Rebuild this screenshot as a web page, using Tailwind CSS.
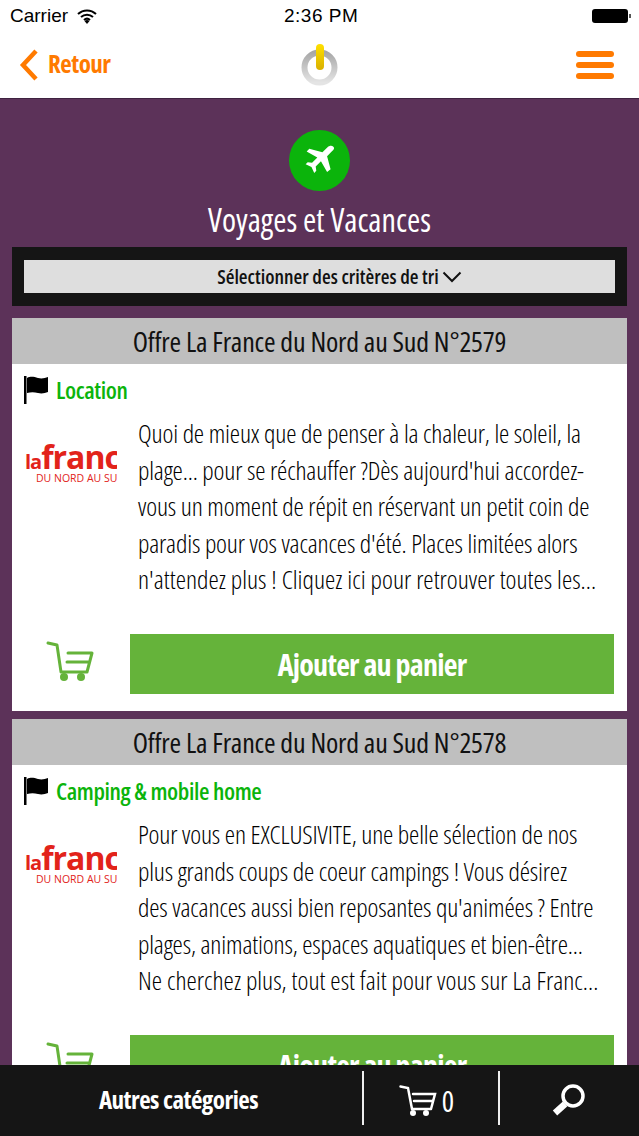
<!DOCTYPE html>
<html><head><meta charset="utf-8"><script src="https://cdn.jsdelivr.net/npm/@tailwindcss/browser@4"></script></head>
<body class="m-0">
<div class="relative w-[639px] h-[1136px] overflow-hidden bg-[#5c3259] font-['Open_Sans',sans-serif] font-stretch-condensed">
  <div class="bg-white h-[99px] border-b border-[#3f2240]">
    <div class="h-[32px] flex items-center justify-between relative pl-[10px] pr-[8px] font-['Liberation_Sans',sans-serif] font-stretch-normal text-black">
      <div class="flex items-center gap-[9px] text-[19px]"><span>Carrier</span>
        <svg width="20" height="15" viewBox="0 0 20 15"><path d="M1 5a13 13 0 0 1 18 0M4 8a9 9 0 0 1 12 0M7 11a4.500 4.500 0 0 1 6 0" fill="none" stroke="#000" stroke-width="2"/><path d="M10 15l-2.500-3a4 4 0 0 1 5 0z"/></svg></div>
      <span class="absolute left-[284px] top-[4px] text-[19px] tracking-[0.5px] leading-[24px]">2:36 PM</span>
      <svg width="40" height="16" viewBox="0 0 40 16" class="mr-[-1px]"><rect x="0" y="1" width="36" height="14" rx="3"/><rect x="37" y="6" width="2" height="4" fill="#555"/></svg>
    </div>
    <div class="h-[66px] flex items-center justify-between pl-[19px] pr-[25px] relative">
      <div class="flex items-center gap-[9px] text-[#ff7a00]">
        <svg width="20" height="34" viewBox="0 0 20 34"><path d="M17 3L4 17l13 14" fill="none" stroke="#ff7a00" stroke-width="4.500"/></svg>
        <span class="text-[25px] font-bold tracking-[-0.5px] -mt-[2px]">Retour</span>
      </div>
      <svg class="absolute left-[298px] top-[10px]" width="44" height="48" viewBox="0 0 44 48"><defs><linearGradient id="g" x1="0" y1="0" x2="0" y2="1"><stop offset="0" stop-color="#a8a8a8"/><stop offset="1" stop-color="#e4e4e4"/></linearGradient><linearGradient id="y" x1="0" y1="0" x2="0" y2="1"><stop offset="0" stop-color="#ffe000"/><stop offset="1" stop-color="#d9b000"/></linearGradient></defs><circle cx="21.500" cy="25.500" r="15" fill="none" stroke="url(#g)" stroke-width="6"/><rect x="18" y="2" width="8" height="26" rx="4" fill="url(#y)"/></svg>
      <div class="flex flex-col gap-[5px]"><div class="w-[38px] h-[6px] rounded-full bg-[#ff7a00]"></div><div class="w-[38px] h-[6px] rounded-full bg-[#ff7a00]"></div><div class="w-[38px] h-[6px] rounded-full bg-[#ff7a00]"></div></div>
    </div>
  </div>

  <div class="flex flex-col items-center pt-[31px]">
    <div class="w-[61px] h-[61px] rounded-full bg-[#0bb40b] flex items-center justify-center">
      <svg width="35" height="35" viewBox="0 0 24 24" fill="#fff"><path d="M21.500 2.500c-1-1-2.800-.8-4 .4L14 6.400 5 4 3.200 5.800 10.500 10l-3.600 3.600-3-.4L2.500 14.600l4 1.900 1.900 4 1.400-1.400-.4-3 3.600-3.600 4.200 7.300L19.600 18l-2.400-9 3.500-3.500c1.200-1.200 1.800-2 .8-3z"/></svg>
    </div>
    <h1 class="text-white text-[32px] font-medium leading-[40px] mt-[9px] mb-[7px]">Voyages et Vacances</h1>
  </div>

  <div class="mx-[12px] h-[59px] bg-[#151515] px-[12px] pt-[13px]">
    <div class="h-[33px] bg-[#dedede] flex items-center justify-center gap-[3px] text-[#111] text-[20px] font-semibold pl-[40px]">
      <span>Sélectionner des critères de tri</span>
      <svg width="20" height="12" viewBox="0 0 20 12"><path d="M1.500 1.500L10 10l8.500-8.500" fill="none" stroke="#111" stroke-width="2"/></svg>
    </div>
  </div>

  <section class="mx-[12px] mt-[12px] h-[393px] bg-white">
    <h2 class="h-[46px] bg-[#bfbfbf] flex items-center justify-center text-[28px] font-medium tracking-[-0.2px] text-[#111]">Offre La France du Nord au Sud N°2579</h2>
    <div class="h-[52px] flex items-center gap-[7px] pl-[12px]">
      <svg width="25" height="28" viewBox="0 0 25 28"><rect x="0" y="0" width="2.500" height="28"/><path d="M3 2c4-2 7-1 11 0s7 0 10-1v15c-3 1-6 2-10 1s-7-1-11 0z"/></svg>
      <span class="text-[#0bb40b] text-[24px] font-semibold tracking-[-0.4px]">Location</span>
    </div>
    <div class="flex h-[218px]">
      <div class="w-[126px] shrink-0 pl-[13px] pt-[26px]">
        <div class="w-[92px] h-[44px] overflow-hidden whitespace-nowrap text-[#e2231a] font-['Open_Sans',sans-serif] font-stretch-normal leading-none">
          <div class="text-[32px] font-bold h-[28px] tracking-[-1px] mt-[-1px]"><span class="text-[20px]">la</span>franc</div>
          <div class="text-[10.500px] pl-[11px] mt-[4px]">DU NORD AU SUD</div>
        </div>
      </div>
      <p class="text-[26px] font-light tracking-[-0.16px] leading-[36.500px] text-[#000] whitespace-nowrap -mt-[1px]">Quoi de mieux que de penser à la chaleur, le soleil, la<br>plage... pour se réchauffer ?Dès aujourd'hui accordez-<br>vous un moment de répit en réservant un petit coin de<br>paradis pour vos vacances d'été. Places limitées alors<br><span class="tracking-[0.02px]">n'attendez plus ! Cliquez ici pour retrouver toutes les...</span></p>
    </div>
    <div class="flex items-start pl-[34px]">
      <svg class="mt-[7px]" width="48" height="42" viewBox="0 0 48 42" fill="none" stroke="#65b33a" stroke-width="3" stroke-linecap="round" stroke-linejoin="round"><path d="M2 2l9 2 4 27h26M22 12h24l-5 19M21 21h21"/><circle cx="18" cy="36" r="4" fill="#65b33a" stroke="none"/><circle cx="35" cy="36" r="4" fill="#65b33a" stroke="none"/></svg>
      <div class="ml-[36px] w-[484px] h-[60px] bg-[#65b33a] flex items-center justify-center text-white text-[30px] font-bold tracking-[-0.75px]">Ajouter au panier</div>
    </div>
  </section>

  <section class="mx-[12px] mt-[8px] h-[393px] bg-white">
    <h2 class="h-[46px] bg-[#bfbfbf] flex items-center justify-center text-[28px] font-medium tracking-[-0.2px] text-[#111]">Offre La France du Nord au Sud N°2578</h2>
    <div class="h-[52px] flex items-center gap-[7px] pl-[12px]">
      <svg width="25" height="28" viewBox="0 0 25 28"><rect x="0" y="0" width="2.500" height="28"/><path d="M3 2c4-2 7-1 11 0s7 0 10-1v15c-3 1-6 2-10 1s-7-1-11 0z"/></svg>
      <span class="text-[#0bb40b] text-[24px] font-semibold tracking-[-0.4px]">Camping &amp; mobile home</span>
    </div>
    <div class="flex h-[218px]">
      <div class="w-[126px] shrink-0 pl-[13px] pt-[26px]">
        <div class="w-[92px] h-[44px] overflow-hidden whitespace-nowrap text-[#e2231a] font-['Open_Sans',sans-serif] font-stretch-normal leading-none">
          <div class="text-[32px] font-bold h-[28px] tracking-[-1px] mt-[-1px]"><span class="text-[20px]">la</span>franc</div>
          <div class="text-[10.500px] pl-[11px] mt-[4px]">DU NORD AU SUD</div>
        </div>
      </div>
      <p class="text-[26px] font-light tracking-[-0.16px] leading-[36.500px] text-[#000] whitespace-nowrap -mt-[1px]">Pour vous en EXCLUSIVITE, une belle sélection de nos<br>plus grands coups de coeur campings ! Vous désirez<br>des vacances aussi bien reposantes qu'animées ? Entre<br>plages, animations, espaces aquatiques et bien-être...<br><span class="tracking-[0.02px]">Ne cherchez plus, tout est fait pour vous sur La Franc...</span></p>
    </div>
    <div class="flex items-start pl-[34px]">
      <svg class="mt-[7px]" width="48" height="42" viewBox="0 0 48 42" fill="none" stroke="#65b33a" stroke-width="3" stroke-linecap="round" stroke-linejoin="round"><path d="M2 2l9 2 4 27h26M22 12h24l-5 19M21 21h21"/><circle cx="18" cy="36" r="4" fill="#65b33a" stroke="none"/><circle cx="35" cy="36" r="4" fill="#65b33a" stroke="none"/></svg>
      <div class="ml-[36px] w-[484px] h-[60px] bg-[#65b33a] flex items-center justify-center text-white text-[30px] font-bold tracking-[-0.75px]">Ajouter au panier</div>
    </div>
  </section>

  <nav class="absolute left-0 right-0 bottom-0 h-[71px] bg-[#151515] flex text-white">
    <div class="w-[362px] flex items-center justify-center text-[25px] font-bold tracking-[-0.5px] pr-[5px] pb-[2px]">Autres catégories</div>
    <div class="w-[138px] flex items-center justify-center gap-[5px] relative pr-[9px]">
      <div class="absolute left-0 top-[6px] h-[54px] w-[2px] bg-[#eee]"></div>
      <div class="absolute right-0 top-[6px] h-[54px] w-[2px] bg-[#eee]"></div>
      <svg width="38" height="32" viewBox="0 0 38 32" fill="none" stroke="#fff" stroke-width="2.500" stroke-linecap="round"><path d="M1.500 1.500L9 3l4 21h19M14 9h22l-4 15M15 16h18"/><circle cx="14" cy="28" r="3" fill="#fff" stroke="none"/><circle cx="27" cy="28" r="3" fill="#fff" stroke="none"/></svg>
      <span class="text-[29px] font-medium">0</span>
    </div>
    <div class="flex-1 flex items-center justify-center pr-[2px] pb-[2px]">
      <svg width="34" height="34" viewBox="0 0 34 34" fill="none" stroke="#fff"><circle cx="21" cy="13" r="10" stroke-width="3.500"/><path d="M13 21L3 30" stroke-width="6.500"/></svg>
    </div>
  </nav>
</div>
</body></html>
